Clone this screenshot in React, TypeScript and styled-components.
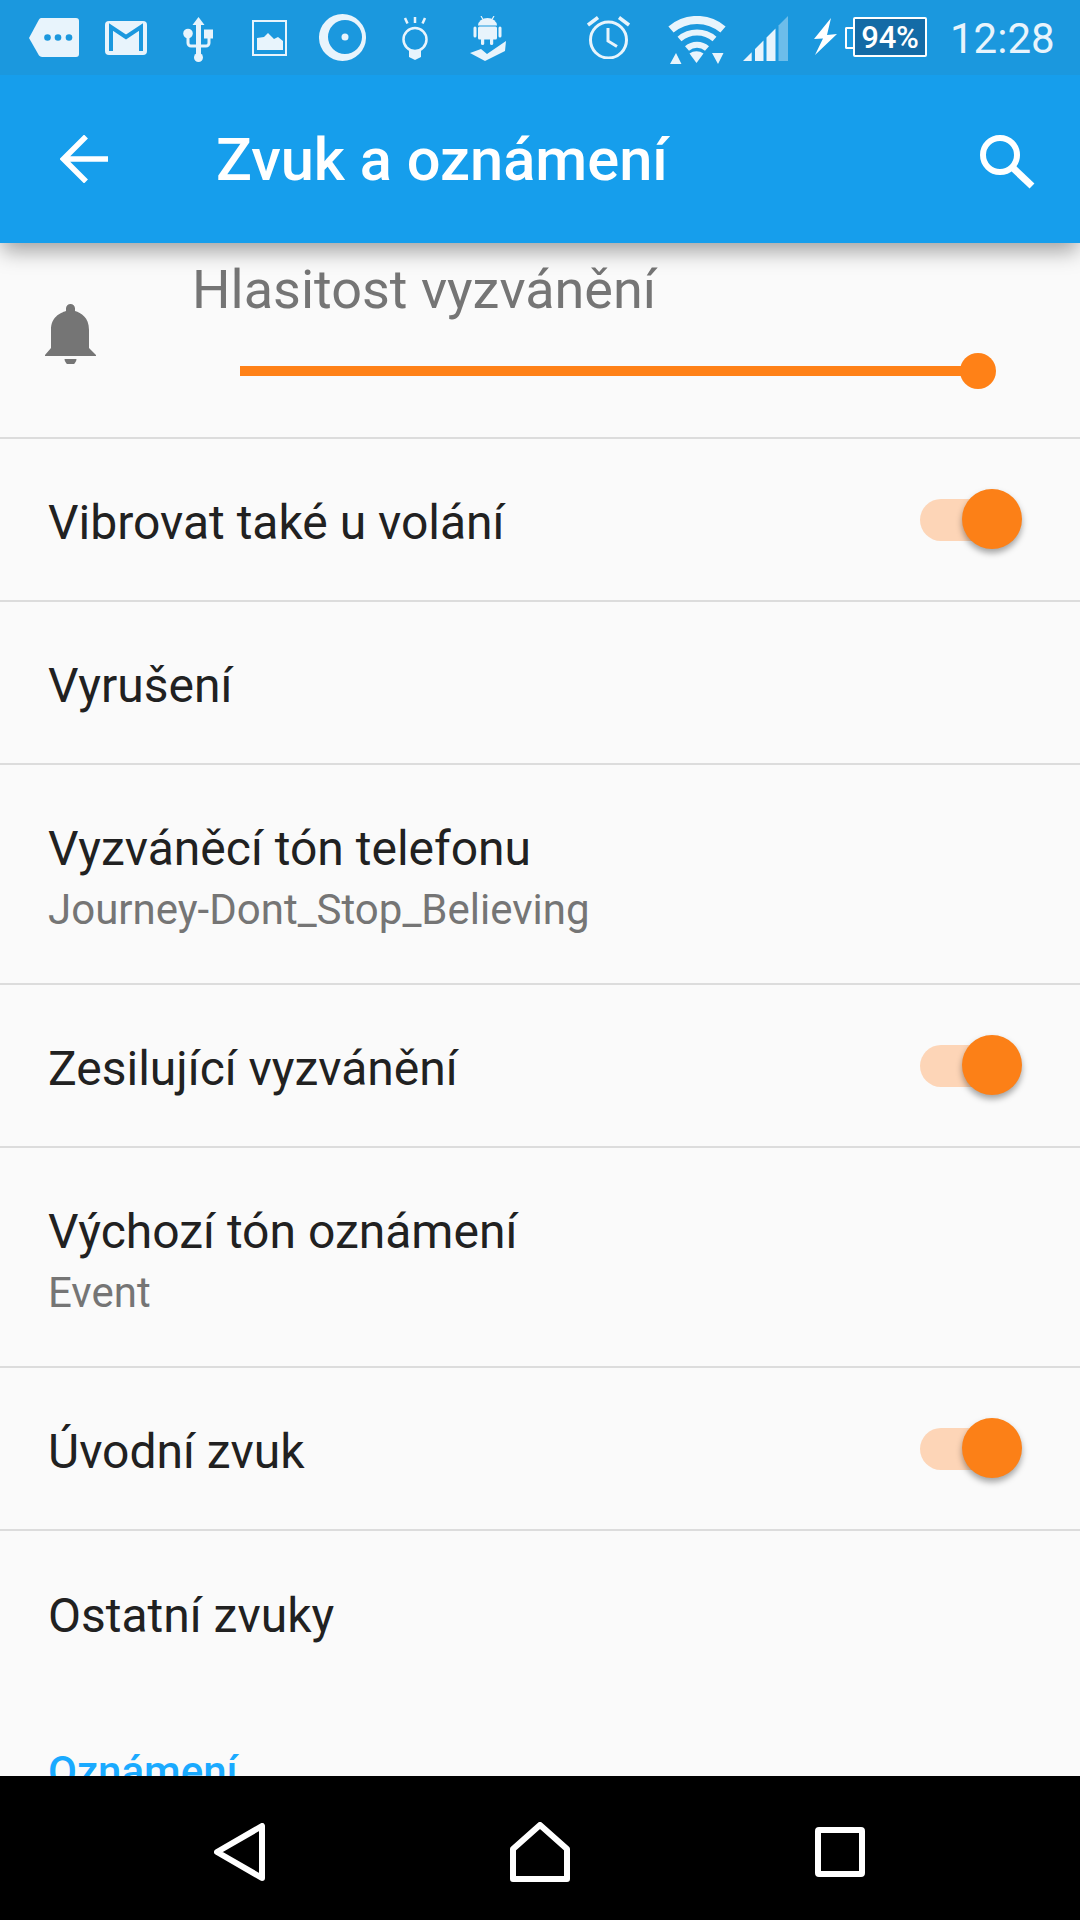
import React from "react";
import styled, { createGlobalStyle } from "styled-components";

const Global = createGlobalStyle`
  html, body { margin: 0; padding: 0; background: #000; }
  #root { width: 1080px; height: 1920px; }
`;

const Screen = styled.div`
  width: 1080px;
  height: 1920px;
  display: flex;
  flex-direction: column;
  overflow: hidden;
  font-family: Roboto, "Noto Sans", sans-serif;
  background: #fafafa;
`;

const StatusBar = styled.div`
  height: 75px;
  flex: none;
  display: flex;
  align-items: flex-start;
  padding-left: 29px;
  background: #1b98de;
  position: relative;
  z-index: 3;
`;

const StatusIcon = styled.svg<{ $left: number; $top: number }>`
  flex: none;
  display: block;
  margin-left: ${(p) => p.$left}px;
  margin-top: ${(p) => p.$top}px;
`;

const Battery = styled.div`
  flex: none;
  position: relative;
  box-sizing: border-box;
  width: 74px;
  height: 40px;
  margin-left: 16px;
  margin-top: 17px;
  display: flex;
  align-items: center;
  justify-content: center;
  background: #146ba6;
  border: 2px solid #fff;
  border-radius: 2px;
  color: #fff;
  font-size: 31px;
  font-weight: 500;
  letter-spacing: -0.2px;

  &::before {
    content: "";
    position: absolute;
    left: -10px;
    top: 8px;
    width: 8px;
    height: 18px;
    border: 2px solid #fff;
    border-right: 0;
    border-radius: 2px 0 0 2px;
    background: transparent;
  }
`;

const Clock = styled.div`
  flex: none;
  margin-left: 23px;
  margin-top: 17px;
  font-size: 42px;
  line-height: 44px;
  color: #e8f4fc;
`;

const AppBar = styled.div`
  height: 168px;
  flex: none;
  display: flex;
  align-items: flex-start;
  background: #169eec;
  box-shadow: 0 10px 20px -2px rgba(0, 0, 0, 0.36);
  position: relative;
  z-index: 2;
`;

const BackIcon = styled.svg`
  flex: none;
  margin-left: 60px;
  margin-top: 60px;
`;

const Title = styled.div`
  margin-left: 108px;
  margin-top: 52px;
  flex: 1;
  font-size: 59.6px;
  line-height: 66px;
  font-weight: 500;
  color: #fff;
`;

const SearchIcon = styled.svg`
  flex: none;
  margin-right: 45px;
  margin-top: 60px;
`;

const Content = styled.div`
  flex: 1;
  min-height: 0;
  overflow: hidden;
  display: flex;
  flex-direction: column;
`;

const VolumeRow = styled.div`
  height: 196px;
  box-sizing: border-box;
  flex: none;
  display: flex;
  border-bottom: 2px solid #dcdcdc;
`;

const BellIcon = styled.svg`
  flex: none;
  margin-left: 45px;
  margin-top: 61px;
`;

const VolumeBody = styled.div`
  flex: 1;
  margin-left: 96px;
  display: flex;
  flex-direction: column;
`;

const VolumeLabel = styled.div`
  margin-top: 16px;
  font-size: 54px;
  line-height: 62px;
  color: #757575;
`;

const Slider = styled.div`
  position: relative;
  margin-left: 48px;
  margin-top: 45px;
  width: 743px;
  height: 10px;
  background: #ff8117;

  &::after {
    content: "";
    position: absolute;
    right: -13px;
    top: -13px;
    width: 36px;
    height: 36px;
    border-radius: 50%;
    background: #ff8117;
  }
`;

const Row = styled.div<{ $height: number }>`
  height: ${(p) => p.$height}px;
  box-sizing: border-box;
  flex: none;
  display: flex;
  align-items: center;
  justify-content: space-between;
  padding: 0 58px 0 48px;
  border-bottom: 2px solid #dcdcdc;
`;

const RowText = styled.div`
  display: flex;
  flex-direction: column;
  padding-top: 5px;
`;

const RowTitle = styled.div`
  font-size: 48px;
  line-height: 60px;
  color: #212121;
  padding-top: 6px;
`;

const RowSub = styled.div`
  font-size: 42px;
  line-height: 62px;
  color: #757575;
`;

const Switch = styled.div`
  position: relative;
  flex: none;
  width: 82px;
  height: 42px;
  margin-right: 20px;
  border-radius: 21px;
  background: #fdd5b7;

  &::after {
    content: "";
    position: absolute;
    right: -20px;
    top: -10px;
    width: 60px;
    height: 60px;
    border-radius: 50%;
    background: #fc8017;
    box-shadow: 0 4px 6px rgba(0, 0, 0, 0.35);
  }
`;

const PlainRow = styled.div`
  height: 163px;
  flex: none;
  display: flex;
  align-items: center;
  padding-left: 48px;
`;

const SectionHead = styled.div`
  margin-top: 54px;
  padding-left: 48px;
  font-size: 42px;
  line-height: 48px;
  font-weight: 500;
  color: #1aaaff;
`;

const NavBar = styled.div`
  height: 144px;
  box-sizing: border-box;
  padding-top: 8px;
  flex: none;
  display: grid;
  grid-template-columns: repeat(3, 300px);
  justify-content: center;
  align-items: center;
  justify-items: center;
  background: #000;
  position: relative;
  z-index: 2;
`;

const ic = "#e8f4fc";
const blue = "#1b98de";

export default function App() {
  return (
    <Screen>
      <Global />
      <StatusBar>
        <StatusIcon $left={0} $top={18} width={50} height={39} viewBox="0 0 50 39">
          <path d="M12 0H47a3 3 0 0 1 3 3V36a3 3 0 0 1-3 3H13a4 4 0 0 1-3-1.500L0 20 10 1.500A4 4 0 0 1 12 0Z" fill={ic} />
          <circle cx="18.500" cy="19.500" r="3.300" fill={blue} />
          <circle cx="29" cy="19.500" r="3.300" fill={blue} />
          <circle cx="40" cy="19.500" r="3.300" fill={blue} />
        </StatusIcon>
        <StatusIcon $left={26} $top={21} width={42} height={34} viewBox="0 0 42 34">
          <rect width="42" height="34" rx="4" fill={ic} />
          <path d="M6 30V6L21 16 36 6V30" fill="none" stroke={blue} strokeWidth="4" />
        </StatusIcon>
        <StatusIcon $left={36} $top={17} width={30} height={45} viewBox="0 0 30 45">
          <path d="M15.500 0L21.500 8H18V30H13V8H9.500Z" fill={ic} />
          <circle cx="15.500" cy="40.500" r="4.500" fill={ic} />
          <rect x="13" y="28" width="5" height="10" fill={ic} />
          <circle cx="5" cy="16.500" r="4.800" fill={ic} />
          <path d="M5 20V26a3 3 0 0 0 3 3H23a3 3 0 0 0 3-3V19" fill="none" stroke={ic} strokeWidth="3" />
          <rect x="21" y="12.500" width="9" height="9" fill={ic} />
        </StatusIcon>
        <StatusIcon $left={39} $top={20} width={35} height={36} viewBox="0 0 35 36">
          <rect x="1" y="1" width="33" height="34" fill="none" stroke={ic} strokeWidth="2" />
          <path d="M5 30V18L12 17 16 13 22 19 26 17 31 21V30Z" fill={ic} />
        </StatusIcon>
        <StatusIcon $left={32} $top={14} width={47} height={47} viewBox="0 0 47 47">
          <path fillRule="evenodd" d="M23.500 0a23.500 23.500 0 1 0 0 47 23.500 23.500 0 1 0 0-47ZM26 6a17 17 0 1 1 0 34 17 17 0 1 1 0-34Z" fill={ic} />
          <circle cx="26" cy="23" r="3.500" fill={ic} />
        </StatusIcon>
        <StatusIcon $left={36} $top={16} width={26} height={44} viewBox="0 0 26 44">
          <path d="M3 2L5.500 7.500M13 1V7M23 2L20.500 7.500" fill="none" stroke={ic} strokeWidth="2.500" />
          <circle cx="13" cy="23.500" r="11.500" fill="none" stroke={ic} strokeWidth="2.500" />
          <path d="M7 34L13 35.500 19 34V41L13 44 7 41Z" fill={ic} />
        </StatusIcon>
        <StatusIcon $left={42} $top={16} width={37} height={46} viewBox="0 0 37 46">
          <path d="M11 0L13 3.500M24 0L22 3.500" stroke={ic} strokeWidth="1.200" />
          <path d="M8 9.500a9.500 7.500 0 0 1 19 0Z" fill={ic} />
          <rect x="8" y="10.500" width="19" height="13" rx="1.500" fill={ic} />
          <rect x="3.500" y="10.500" width="3" height="11" rx="1.500" fill={ic} />
          <rect x="28.500" y="10.500" width="3" height="11" rx="1.500" fill={ic} />
          <rect x="11" y="22" width="3.200" height="7" rx="1.600" fill={ic} />
          <rect x="20" y="22" width="3.200" height="7" rx="1.600" fill={ic} />
          <path d="M0 37L11 33 17 38 36 25 35 35 15 45Z" fill={ic} />
        </StatusIcon>
        <StatusIcon $left={80} $top={16} width={43} height={43} viewBox="0 0 43 43">
          <path d="M1 9L11 1.500M42 9L32 1.500" stroke={ic} strokeWidth="3.500" />
          <circle cx="21.500" cy="24" r="18" fill="none" stroke={ic} strokeWidth="3" />
          <path d="M21 12V25L30 30.500" fill="none" stroke={ic} strokeWidth="3" />
        </StatusIcon>
        <StatusIcon $left={38} $top={16} width={58} height={48} viewBox="0 0 58 48">
          <path d="M3 13.500A40 40 0 0 1 55 13.500" fill="none" stroke={ic} strokeWidth="8" />
          <path d="M11.500 23A27 27 0 0 1 46.500 23" fill="none" stroke={ic} strokeWidth="6" />
          <path d="M19 32.500A15 15 0 0 1 39 32.500" fill="none" stroke={ic} strokeWidth="6" />
          <path d="M21.500 37.500A12 12 0 0 1 35.500 37.500L28.500 47Z" fill={ic} />
          <path d="M2 48L8 37 13.500 48ZM44 37H55.500L50 48Z" fill={ic} />
        </StatusIcon>
        <StatusIcon $left={17} $top={16} width={45} height={45} viewBox="0 0 45 45">
          <path d="M0 45L8.700 36.300V45ZM12 33L20.500 24.500V45H12ZM23.500 21.500L32.500 12.500V45H23.500Z" fill={ic} />
          <path d="M35.500 9.500L45 0V45H35.500Z" fill={ic} opacity="0.4" />
        </StatusIcon>
        <StatusIcon $left={26} $top={18} width={23} height={37} viewBox="0 0 23 37">
          <path d="M17 0L0 21 9 20.500 1 37 23 16 13 17Z" fill="#fff" />
        </StatusIcon>
        <Battery>94%</Battery>
        <Clock>12:28</Clock>
      </StatusBar>
      <AppBar>
        <BackIcon width="48" height="48" viewBox="0 0 48 48">
          <path d="M48 24H4M26 1.500L3.500 24 26 46.500" fill="none" stroke="#fff" strokeWidth="5.500" />
        </BackIcon>
        <Title>Zvuk a oznámení</Title>
        <SearchIcon width="55" height="54" viewBox="0 0 55 54">
          <circle cx="20" cy="20" r="17" fill="none" stroke="#fff" strokeWidth="6" />
          <path d="M32 32L52 51" fill="none" stroke="#fff" strokeWidth="7" />
        </SearchIcon>
      </AppBar>
      <Content>
        <VolumeRow>
          <BellIcon width="51" height="60" viewBox="0 0 51 60">
            <path d="M25.500 0a4.500 4.500 0 0 1 4.500 4.500V7C36 9 44 13 44 26V44L51 51V52H0V51L6 44V26C6 13 15 9 21 7V4.500A4.500 4.500 0 0 1 25.500 0Z" fill="#757575" />
            <path d="M19.500 55H31.500A6 6 0 0 1 19.500 55Z" fill="#757575" />
          </BellIcon>
          <VolumeBody>
            <VolumeLabel>Hlasitost vyzvánění</VolumeLabel>
            <Slider />
          </VolumeBody>
        </VolumeRow>
        <Row $height={163}>
          <RowTitle>Vibrovat také u volání</RowTitle>
          <Switch />
        </Row>
        <Row $height={163}>
          <RowTitle>Vyrušení</RowTitle>
        </Row>
        <Row $height={220}>
          <RowText>
            <RowTitle>Vyzváněcí tón telefonu</RowTitle>
            <RowSub>Journey-Dont_Stop_Believing</RowSub>
          </RowText>
        </Row>
        <Row $height={163}>
          <RowTitle>Zesilující vyzvánění</RowTitle>
          <Switch />
        </Row>
        <Row $height={220}>
          <RowText>
            <RowTitle>Výchozí tón oznámení</RowTitle>
            <RowSub>Event</RowSub>
          </RowText>
        </Row>
        <Row $height={163}>
          <RowTitle>Úvodní zvuk</RowTitle>
          <Switch />
        </Row>
        <PlainRow>
          <RowTitle>Ostatní zvuky</RowTitle>
        </PlainRow>
        <SectionHead>Oznámení</SectionHead>
      </Content>
      <NavBar>
        <svg width="52" height="58" viewBox="0 0 52 58">
          <path d="M48 3V55L3 29Z" fill="none" stroke="#fff" strokeWidth="6" strokeLinejoin="round" />
        </svg>
        <svg width="60" height="60" viewBox="0 0 60 60">
          <path d="M30 3L57 27V57H3V27Z" fill="none" stroke="#fff" strokeWidth="6" strokeLinejoin="round" />
        </svg>
        <svg width="50" height="50" viewBox="0 0 50 50">
          <rect x="3" y="3" width="44" height="44" rx="1" fill="none" stroke="#fff" strokeWidth="6" />
        </svg>
      </NavBar>
    </Screen>
  );
}
